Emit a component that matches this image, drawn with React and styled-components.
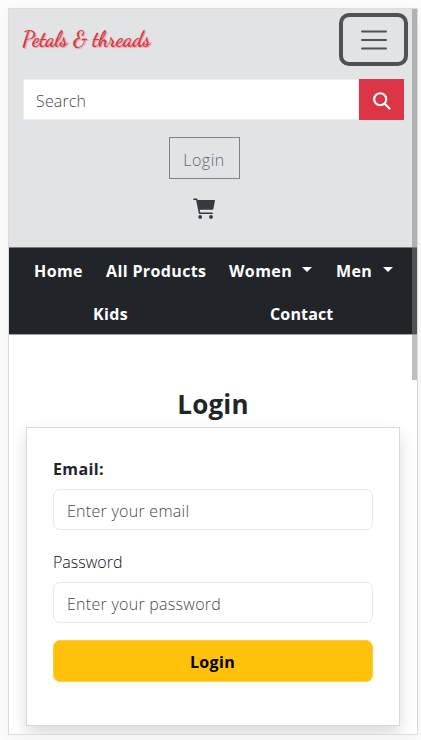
import React from "react";
import styled, { createGlobalStyle } from "styled-components";

const GlobalStyle = createGlobalStyle`
  * { box-sizing: border-box; }
  body { margin: 0; background: #fdfdfd; font-family: "Open Sans", "Noto Sans", sans-serif; font-size: 16px; color: #212529; overflow: hidden; }
  h1, form { margin: 0; }
  button, input { font-family: inherit; }
`;

const Stage = styled.div`
  height: 740px;
  padding: 8px 3px 5px 8px;
  overflow: hidden;
`;

const Phone = styled.main`
  position: relative;
  display: flex;
  flex-direction: column;
  width: 410px;
  height: 727px;
  background: #fff;
  border: 1px solid #dcdcdc;
  box-shadow: 0 4px 20px rgba(0, 0, 0, 0.055);
  overflow: hidden;
`;

const ScrollThumb = styled.div`
  position: absolute;
  top: 0;
  right: 0;
  width: 5px;
  height: 371px;
  background: rgba(128, 128, 128, 0.5);
`;

const Header = styled.header`
  display: flex;
  flex-direction: column;
  align-items: center;
  flex: none;
  height: 238px;
  padding: 4px 13px 0 14px;
  background: #e2e3e5;
`;

const BrandRow = styled.div`
  display: flex;
  justify-content: space-between;
  align-self: stretch;
  height: 66px;
  margin-right: -4px;
`;

const Brand = styled.div`
  margin: 13px 0 0 -1px;
  height: 30px;
  font: 700 21px/28px "Dancing Script", cursive;
  letter-spacing: -0.04px;
  white-space: nowrap;
  color: #dc3545;
  text-shadow: 1px 1px 1px rgba(220, 53, 69, 0.4);
`;

const Toggler = styled.button`
  display: grid;
  place-items: center;
  width: 69px;
  height: 53px;
  padding: 0;
  background: transparent;
  border: 4px solid #505153;
  border-radius: 10px;
`;

const Search = styled.div`
  display: flex;
  align-self: stretch;
  height: 41px;
`;

const SearchInput = styled.input`
  flex: 1;
  min-width: 0;
  padding: 2px 12px 0;
  border: 1px solid #edeff2;
  background: #fff;
  font-size: 16px;
  font-weight: 300;
  letter-spacing: 0.15px;
  &::placeholder { color: #45494d; opacity: 1; }
`;

const SearchButton = styled.button`
  display: grid;
  place-items: center;
  width: 45px;
  padding: 2px 0 0;
  border: 0;
  color: #fff;
  background: #dc3545;
`;

const LoginLink = styled.button`
  width: 71px;
  height: 42px;
  margin: 17px 18px 0 0;
  padding: 4px 1px 0 0;
  border: 1px solid #7c8389;
  background: transparent;
  color: #616a73;
  font-size: 16px;
  font-weight: 300;
  letter-spacing: 0.55px;
`;

const Cart = styled.svg`
  flex: none;
  margin: 19px 19px 0 0;
`;

const Nav = styled.nav`
  flex: none;
  height: 88px;
  background: #212529;
  border-top: 1px solid #777b7e;
  border-bottom: 1px solid #a5a5a7;
`;

const NavRow = styled.div`
  display: flex;
  height: 43px;
  padding-left: ${(p) => p.$indent}px;
  align-items: center;
`;

const NavItem = styled.a`
  display: flex;
  align-items: center;
  flex: none;
  width: ${(p) => p.$width}px;
  margin-right: ${(p) => p.$gap || 0}px;
  padding-top: 3px;
  color: #fff;
  font-weight: 700;
  letter-spacing: ${(p) => p.$track || 0}px;
  white-space: nowrap;
`;

const Caret = styled.i`
  margin: -3px 0 0 auto;
  border: 5.5px solid transparent;
  border-top: 5.5px solid #fff;
  border-bottom: 0;
`;

const Title = styled.h1`
  flex: none;
  margin-top: 51px;
  height: 41px;
  text-align: center;
  font-size: 26px;
  font-weight: 700;
  line-height: 37px;
  letter-spacing: 0.2px;
`;

const Card = styled.form`
  flex: none;
  display: flex;
  flex-direction: column;
  width: 374px;
  height: 299px;
  margin-left: 17px;
  padding: 29px 26px 0;
  border: 1px solid #d8d9da;
  background: #fff;
  box-shadow: 0 8px 16px rgba(0, 0, 0, 0.15);
`;

const Label = styled.label`
  height: 24px;
  margin-bottom: 8px;
  font-weight: ${(p) => (p.$bold ? 700 : 300)};
  color: ${(p) => (p.$bold ? "#212529" : "#0c1014")};
  line-height: 25px;
  letter-spacing: ${(p) => p.$track || 0}px;
`;

const Field = styled.input`
  width: 320px;
  height: 41px;
  margin-bottom: 20px;
  padding: 2px 13px 0;
  border: 1px solid #e7e9ec;
  border-radius: 7px;
  font-size: 16px;
  font-weight: 300;
  letter-spacing: 0.27px;
  &::placeholder { color: #45494d; opacity: 1; }
`;

const Submit = styled.button`
  width: 320px;
  height: 42px;
  margin-top: -3px;
  padding: 2px 1px 0 0;
  border: 1px solid #ffcd39;
  border-radius: 7px;
  background: #ffc109;
  color: #000;
  font-size: 16px;
  font-weight: 700;
  letter-spacing: 0.35px;
`;

export default function App() {
  return (
    <Stage>
      <GlobalStyle />
      <Phone>
        <Header>
          <BrandRow>
            <Brand>Petals &amp; threads</Brand>
            <Toggler aria-label="Menu">
              <svg width="28" height="22" viewBox="0 0 28 22" fill="none" stroke="#505255" strokeWidth="2" strokeLinecap="round">
                <path d="M2 2.5h24M2 11h24M2 19.5h24" />
              </svg>
            </Toggler>
          </BrandRow>
          <Search>
            <SearchInput placeholder="Search" />
            <SearchButton aria-label="Search">
              <svg width="18" height="18" viewBox="0 0 18 18" fill="none" stroke="currentColor" strokeWidth="2.1" strokeLinecap="round">
                <circle cx="7.2" cy="7.2" r="6" />
                <path d="M11.7 11.7l4.8 4.8" />
              </svg>
            </SearchButton>
          </Search>
          <LoginLink>Login</LoginLink>
          <Cart width="22" height="21" viewBox="0 0 22 21">
            <path fill="none" stroke="#343a40" strokeWidth="1.6" strokeLinecap="round" strokeLinejoin="round" d="M1 1.3h2.8L6.6 15.3h12.6" />
            <path fill="#343a40" d="M4.2 2h17.3q.5 0 .5.6l-1.6 8.2q-.2 1-1.1 1H5.9z" />
            <circle cx="7.2" cy="18.9" r="1.9" fill="#343a40" />
            <circle cx="18" cy="18.9" r="1.9" fill="#343a40" />
          </Cart>
        </Header>
        <Nav>
          <NavRow $indent={25}>
            <NavItem $width={72} $track={0.4}>Home</NavItem>
            <NavItem $width={123} $track={0.37}>All Products</NavItem>
            <NavItem $width={83} $gap={24} $track={0.4}>Women<Caret /></NavItem>
            <NavItem $width={57} $track={0.3}>Men<Caret /></NavItem>
          </NavRow>
          <NavRow $indent={84}>
            <NavItem $width={177} $track={0.4}>Kids</NavItem>
            <NavItem $width={65} $track={0.15}>Contact</NavItem>
          </NavRow>
        </Nav>
        <Title>Login</Title>
        <Card>
          <Label $bold $track={0.4}>Email:</Label>
          <Field placeholder="Enter your email" />
          <Label>Password</Label>
          <Field type="password" placeholder="Enter your password" />
          <Submit type="button">Login</Submit>
        </Card>
        <ScrollThumb />
      </Phone>
    </Stage>
  );
}
